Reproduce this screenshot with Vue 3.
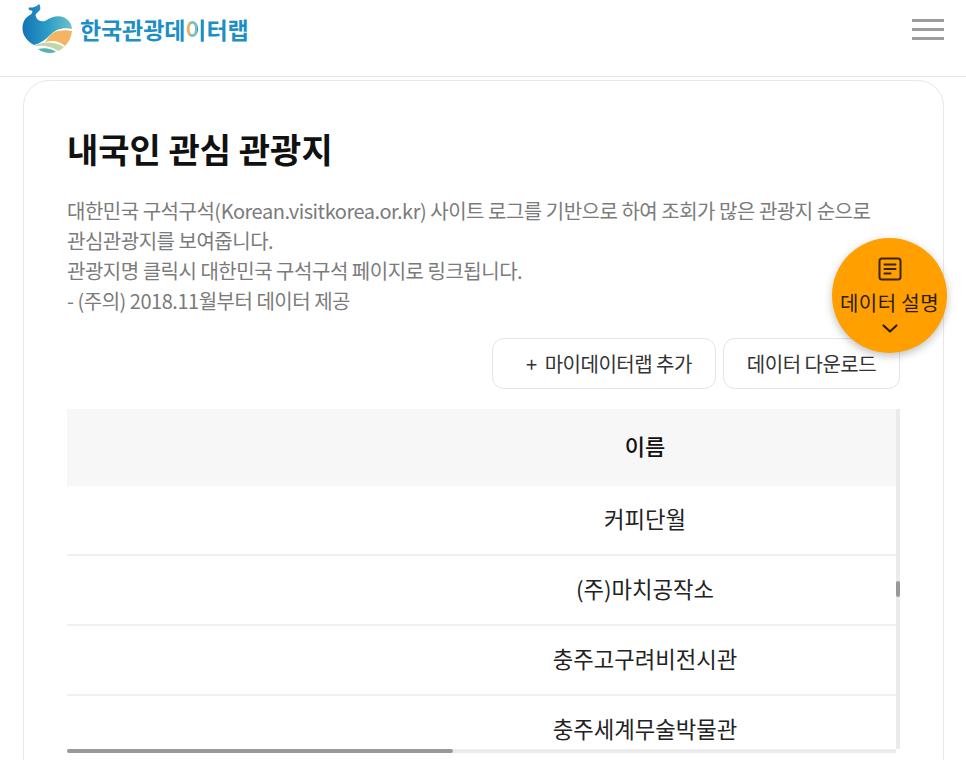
<script setup>
const rows = ['커피단월', '(주)마치공작소', '충주고구려비전시관', '충주세계무술박물관']
const lines = [
  '대한민국 구석구석(Korean.visitkorea.or.kr) 사이트 로그를 기반으로 하여 조회가 많은 관광지 순으로',
  '관심관광지를 보여줍니다.',
  '관광지명 클릭시 대한민국 구석구석 페이지로 링크됩니다.',
  '- (주의) 2018.11월부터 데이터 제공'
]
</script>

<template>
  <div class="page">
    <header class="header">
      <div class="logo">
        <svg class="whale" width="50" height="50" viewBox="0 0 50 50">
          <defs>
            <linearGradient id="body" x1="0" y1="0.2" x2="1" y2="0.2">
              <stop offset="0" stop-color="#1472b5" />
              <stop offset="0.5" stop-color="#2b9cc6" />
              <stop offset="1" stop-color="#6cc3c9" />
            </linearGradient>
          </defs>
          <path d="M17 0 C19 3 19 6 16 8 C14 9.500 13 11 14 13 C16 17 19 18 23 17 C29 13 36 11 41 13 C46 15 49.500 19 50 25 C46 24 40 24 35 26 C29 29 26 34 21 37 C18 39 15 40 12 41 C5 37 0 31 0.500 23 C1 17 4 13 8 11 C10 9.500 11 8 10 6.500 C7 7 6 5 7 3.500 C10 4 14 3 17 0 Z" fill="url(#body)" />
          <path d="M23 38 C27 33 30 28 36 27 C41 26 46 26 50 27 C49.500 33 47 38 43 42 C38 37 30 36 23 38 Z" fill="#f3b562" />
          <path d="M11 42.500 C20 37 33 37 42 43 C40 45 38 46 36 47 C29 42 20 41 11 42.500 Z" fill="#c4d6a9" />
          <path d="M16 45 C22 43.500 29 44 34 48 C28 50 21 49 16 45 Z" fill="#52b6ae" />
        </svg>
        <span class="wordmark">한국관광데<span class="mark">이</span>터랩</span>
      </div>
      <div class="menu" aria-label="메뉴"><i></i><i></i><i></i></div>
    </header>

    <main class="card">
      <h1>내국인 관심 관광지</h1>
      <div class="desc">
        <p v-for="l in lines" :key="l">{{ l }}</p>
      </div>
      <div class="actions">
        <button class="btn add"><span class="plus">+</span>마이데이터랩 추가</button>
        <button class="btn down">데이터 다운로드</button>
      </div>
      <div class="table-wrap">
        <div class="table">
          <div class="table-inner">
            <div class="th">이름</div>
            <div v-for="r in rows" :key="r" class="td">{{ r }}</div>
          </div>
        </div>
        <div class="vbar"><span></span></div>
        <div class="hbar"><span></span></div>
      </div>
    </main>

    <div class="fab">
      <svg width="26" height="26" viewBox="0 0 26 26" fill="none" stroke="#3a2406" stroke-width="2" stroke-linecap="round" stroke-linejoin="round">
        <rect x="2.500" y="2.500" width="21" height="21" rx="2.500" />
        <path d="M7.500 8.500h11M7.500 13h11M7.500 17.500h6" />
      </svg>
      <span class="fab-label">데이터 설명</span>
      <svg class="chev" width="18" height="11" viewBox="0 0 18 11" fill="none" stroke="#2e1d05" stroke-width="2.200" stroke-linecap="round" stroke-linejoin="round">
        <path d="M2.500 2.500 9 8.500l6.500-6" />
      </svg>
    </div>
  </div>
</template>

<style>
html, body { margin: 0; height: 760px; overflow: hidden; background: #fff; }
</style>

<style scoped>
.page {
  position: relative;
  width: 966px;
  height: 760px;
  overflow: hidden;
  background: #fff;
  font-family: "Noto Sans CJK KR", "Noto Sans", sans-serif;
  color: #222;
}
.header {
  height: 77px;
  box-sizing: border-box;
  border-bottom: 1px solid #e6e6e6;
  display: flex;
  justify-content: space-between;
  align-items: flex-start;
  padding: 4px 22px 0 22px;
}
.logo { display: flex; align-items: center; gap: 8px; height: 50px; }
.wordmark {
  font-size: 23px;
  font-weight: 700;
  letter-spacing: -0.1px;
  color: #1b8fc6;
}
.mark {
  background: linear-gradient(90deg, #e3b469 0, #e3b469 24%, #7cc0b8 24%, #7cc0b8 56%, #1b8fc6 56%);
  -webkit-background-clip: text;
  background-clip: text;
  color: transparent;
}
.menu {
  display: flex;
  flex-direction: column;
  gap: 6px;
  margin-top: 15px;
}
.menu i {
  display: block;
  width: 32px;
  height: 3px;
  background: #9c9c9c;
}
.card {
  margin: 3px 22px 0 23px;
  height: 760px;
  box-sizing: border-box;
  border: 1px solid #e8e8e8;
  border-radius: 26px;
  padding: 44px 43px 0 43px;
}
h1 {
  margin: -1px 0 0;
  font-size: 34px;
  line-height: 50px;
  font-weight: 700;
  color: #111;
}
.desc {
  margin-top: 22px;
  font-size: 20px;
  line-height: 30px;
  letter-spacing: -0.48px;
  color: #7b7b7b;
  white-space: nowrap;
}
.desc p { margin: 0; }
.actions {
  display: flex;
  justify-content: flex-end;
  gap: 7px;
  margin-top: 22px;
}
.btn {
  height: 51px;
  box-sizing: border-box;
  background: #fff;
  border: 1px solid #e4e4e4;
  border-radius: 12px;
  font-family: inherit;
  font-size: 20px;
  letter-spacing: -0.5px;
  color: #333;
  padding: 0;
}
.add { width: 224px; padding-left: 10px; }
.plus { margin-right: 8px; }
.down { width: 177px; }
.table-wrap {
  position: relative;
  margin-top: 20px;
  width: 833px;
  height: 344px;
  overflow: hidden;
}
.table { width: 829px; height: 340px; overflow: hidden; }
.table-inner { width: 1156px; }
.th {
  height: 77px;
  background: #f7f7f7;
  display: flex;
  align-items: center;
  justify-content: center;
  padding-bottom: 5px;
  box-sizing: border-box;
  font-size: 22px;
  font-weight: 500;
  color: #111;
}
.td {
  height: 70px;
  box-sizing: border-box;
  border-bottom: 2px solid #f0f0f0;
  padding-bottom: 5px;
  display: flex;
  align-items: center;
  justify-content: center;
  font-size: 22.3px;
  color: #222;
}
.vbar {
  position: absolute;
  top: 0;
  right: 0;
  width: 4px;
  height: 340px;
  background: #ebebeb;
}
.vbar span {
  position: absolute;
  top: 172px;
  left: 0;
  width: 4px;
  height: 16px;
  border-radius: 2px;
  background: #999;
}
.hbar {
  position: absolute;
  left: 0;
  bottom: 0;
  width: 829px;
  height: 4px;
  background: #ebebeb;
}
.hbar span {
  position: absolute;
  left: 0;
  top: 0;
  width: 386px;
  height: 4px;
  border-radius: 2px;
  background: #999;
}
.fab {
  position: absolute;
  left: 832px;
  top: 238px;
  width: 115px;
  height: 115px;
  border-radius: 50%;
  background: #ff9f00;
  box-shadow: 0 3px 8px rgba(0, 0, 0, 0.25);
  display: flex;
  flex-direction: column;
  align-items: center;
  padding-top: 18px;
  box-sizing: border-box;
  color: #2e1d05;
}
.fab-label {
  font-size: 20px;
  line-height: 30px;
  letter-spacing: 0.4px;
  margin-top: 6px;
  white-space: nowrap;
}
.chev { margin-top: 5px; }
</style>
